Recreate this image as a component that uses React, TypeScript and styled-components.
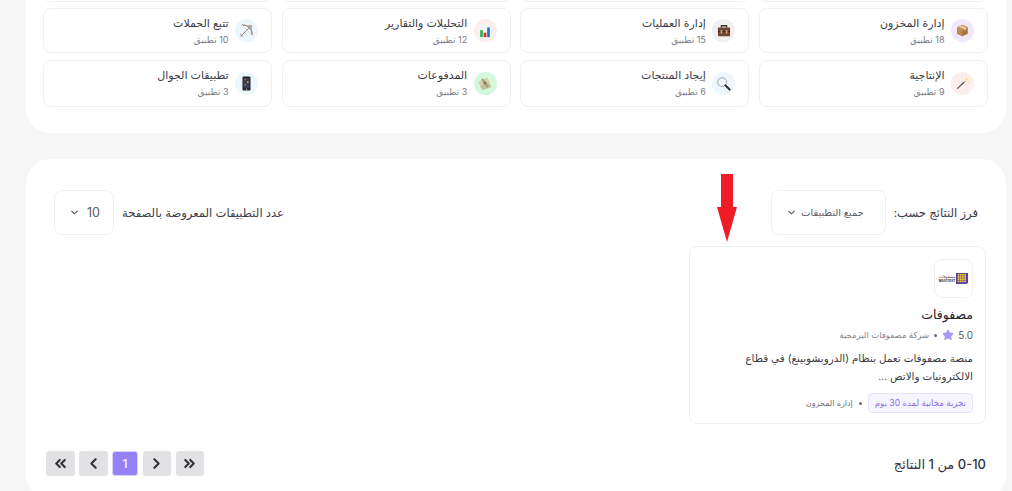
import styled, { createGlobalStyle } from "styled-components";
import { ChevronDown, ChevronLeft, ChevronRight, ChevronsLeft, ChevronsRight, Star } from "lucide-react";
import type { ReactNode } from "react";

const GlobalStyle = createGlobalStyle`
  html, body {
    margin: 0;
    padding: 0;
    height: 491px;
    overflow: hidden;
    background: #f6f6f6;
  }
  * { box-sizing: border-box; }
`;

const Page = styled.div`
  width: 1012px;
  height: 491px;
  overflow: hidden;
  padding: 0 6px 0 26px;
  font-family: "Inter", "DejaVu Sans", sans-serif;
  color: #33333d;
`;

const CategoryPanel = styled.section`
  background: #fff;
  border-radius: 0 0 24px 24px;
  margin-top: -60px;
  height: 193px;
  padding: 15.5px 18px 0 17px;
`;

const CategoryGrid = styled.div`
  display: grid;
  grid-template-columns: repeat(4, 229px);
  grid-template-rows: 46px 45px 47px;
  column-gap: 9.67px;
  row-gap: 6.5px;
`;

const CategoryCard = styled.div`
  display: flex;
  align-items: center;
  gap: 6.5px;
  padding: 0 13px;
  border: 1px solid #f0f0f3;
  border-radius: 8px;
  background: #fff;
`;

const IconCircle = styled.div<{ $bg: string }>`
  width: 23px;
  height: 23px;
  flex: none;
  border-radius: 50%;
  background: ${(p) => p.$bg};
  display: flex;
  align-items: center;
  justify-content: center;
`;

const CategoryName = styled.div`
  font-size: 11px;
  line-height: 15px;
  color: #3b3b45;
`;

const CategoryCount = styled.div`
  font-size: 9px;
  line-height: 13px;
  margin-top: 2px;
  color: #7c7c87;
`;

const ResultsPanel = styled.section`
  position: relative;
  margin-top: 26px;
  height: 340px;
  background: #fff;
  border-radius: 24px;
  padding: 31px 20px 0;
`;

const FilterBar = styled.div`
  display: flex;
  justify-content: space-between;
  padding: 0 8px;
`;

const FilterGroup = styled.div`
  display: flex;
  align-items: center;
  gap: 8px;
`;

const FilterLabel = styled.span`
  font-size: 11.6px;
  color: #3b3b45;
`;

const SelectBox = styled.div<{ $width: number; $inset: number; $size: number }>`
  width: ${(p) => p.$width}px;
  height: 45px;
  display: flex;
  align-items: center;
  justify-content: space-between;
  padding: 0 ${(p) => p.$inset}px 0 14px;
  border: 1px solid #f0f0f3;
  border-radius: 8px;
  font-size: ${(p) => p.$size}px;
  color: #5b5b66;
`;

const AppGrid = styled.div`
  display: grid;
  grid-template-columns: repeat(3, 1fr);
  column-gap: 25px;
  margin-top: 11px;
`;

const AppCard = styled.article`
  height: 178px;
  padding: 12px;
  border: 1px solid #f0f0f3;
  border-radius: 8px;
  display: flex;
  flex-direction: column;
`;

const LogoBox = styled.div`
  width: 39px;
  height: 39px;
  flex: none;
  border: 1px solid #f0f0f3;
  border-radius: 8px;
  display: flex;
  align-items: center;
  justify-content: center;
  gap: 1px;
`;

const LogoWords = styled.div`
  display: flex;
  flex-direction: column;
  align-items: center;
  color: #33333d;
`;

const LogoArabic = styled.span`
  font-size: 4px;
  line-height: 5px;
`;

const LogoLatin = styled.span`
  font-size: 3px;
  line-height: 4px;
  font-weight: 700;
`;

const AppTitle = styled.h3`
  margin: 7px 0 0;
  font-size: 12.5px;
  line-height: 20px;
  font-weight: 400;
  color: #22222a;
`;

const MetaRow = styled.div`
  display: flex;
  align-items: center;
  gap: 5px;
  margin-top: 3px;
  font-size: 8.5px;
  line-height: 14px;
  color: #85858f;
`;

const Rating = styled.span`
  display: flex;
  align-items: center;
  gap: 4px;
  color: #5b5b66;
  font-size: 10px;
`;

const Dot = styled.span`
  width: 3px;
  height: 3px;
  border-radius: 50%;
  background: #6b6b75;
`;

const Description = styled.p`
  margin: 8px 0 0;
  font-size: 10.4px;
  line-height: 18px;
  color: #3b3b45;
`;

const TagRow = styled.div`
  display: flex;
  align-items: center;
  gap: 6px;
  margin-top: 7px;
  font-size: 8px;
  color: #6b6b75;
`;

const TrialTag = styled.span`
  height: 20px;
  padding: 0 6px;
  display: flex;
  align-items: center;
  border: 1px solid #e8e3fb;
  border-radius: 4px;
  background: #f6f4fe;
  font-size: 8.6px;
  color: #8a72e8;
`;

const Footer = styled.div`
  display: flex;
  align-items: center;
  justify-content: space-between;
  margin-top: 27px;
`;

const ResultCount = styled.span`
  font-size: 13px;
  font-weight: 500;
  color: #33333d;
`;

const Pagination = styled.div`
  display: flex;
  gap: 4.5px;
`;

const PageButton = styled.button<{ $active?: boolean }>`
  width: ${(p) => (p.$active ? 26 : 28.5)}px;
  height: 25px;
  padding: 0;
  display: flex;
  align-items: center;
  justify-content: center;
  border: ${(p) => (p.$active ? "1px solid #d9d2fb" : "none")};
  border-radius: 3px;
  background: ${(p) => (p.$active ? "#9680f5" : "#e2e2e4")};
  color: ${(p) => (p.$active ? "#fff" : "#33333d")};
  font-family: "Inter", sans-serif;
  font-size: 12px;
  font-weight: 500;
`;

const Arrow = styled.svg`
  position: absolute;
  left: 691px;
  top: 15px;
`;

const BoxIcon = () => (
  <svg width="13" height="13" viewBox="0 0 16 16">
    <path d="M8 1l6.5 3v8L8 15l-6.5-3V4z" fill="#a9743f" />
    <path d="M8 7.5V15l-6.5-3V4z" fill="#c08a50" />
    <path d="M1.5 4L8 1l6.5 3L8 7.5z" fill="#d3a36c" />
    <path d="M4 2.8l6.5 3.2v2.2l1.6-.8V5L5.600 2z" fill="#f0dcbc" />
  </svg>
);

const BriefcaseIcon = () => (
  <svg width="14" height="13" viewBox="0 0 16 15">
    <path d="M5 4V2h6v2" fill="none" stroke="#3f2a20" strokeWidth="1.5" />
    <rect x="1" y="4" width="14" height="10" rx="1" fill="#6d4530" />
    <rect x="1" y="8" width="14" height="1.2" fill="#3f2a20" />
    <rect x="4" y="7" width="2" height="4" fill="#c9a27a" />
    <rect x="10" y="7" width="2" height="4" fill="#c9a27a" />
  </svg>
);

const ChartIcon = () => (
  <svg width="14" height="14" viewBox="0 0 16 16">
    <rect x="1" y="1" width="14" height="14" fill="#f3f5f8" />
    <rect x="2.500" y="7" width="3" height="8" fill="#2fb04f" />
    <rect x="6.500" y="10" width="3" height="5" fill="#d92b2b" />
    <rect x="10.500" y="4" width="3" height="11" fill="#2470c8" />
  </svg>
);

const BowIcon = () => (
  <svg width="15" height="15" viewBox="0 0 16 16" fill="none">
    <path d="M3 2c7 0 11 4 11 11" stroke="#a08a7c" strokeWidth="1.400" />
    <path d="M3 2l11 11" stroke="#d5ccc6" strokeWidth="0.800" />
    <path d="M2 14L13 3" stroke="#8a7568" strokeWidth="0.900" />
    <path d="M10 2.500h3.500V6" stroke="#b3a194" strokeWidth="1" />
    <path d="M2 11v3h3" stroke="#b3a194" strokeWidth="1" />
  </svg>
);

const WandIcon = () => (
  <svg width="14" height="14" viewBox="0 0 16 16" fill="none">
    <path d="M1.500 14.500L10.500 6" stroke="#4a4a52" strokeWidth="1.300" />
    <path d="M9 7.500L10.500 6" stroke="#c8c8c8" strokeWidth="1.300" />
    <path d="M12 1l.6 1.900 1.900.6-1.900.6L12 6l-.6-1.900-1.900-.6 1.900-.6z" fill="#f4dc6a" />
    <circle cx="14.500" cy="7" r="0.800" fill="#f4dc6a" />
  </svg>
);

const SearchIcon = () => (
  <svg width="15" height="15" viewBox="0 0 16 16" fill="none">
    <circle cx="6.500" cy="6.500" r="4.700" fill="#f4f8fc" stroke="#9aa0a6" strokeWidth="1" />
    <path d="M10 10l4.500 4.500" stroke="#2b2b33" strokeWidth="2.200" strokeLinecap="round" />
  </svg>
);

const MoneyIcon = () => (
  <svg width="16" height="15" viewBox="0 0 16 15">
    <path d="M1 6l9-4.500 3 5-9 4.500z" fill="#d6cfae" />
    <path d="M3 10l9-3 2.500 4-9 3z" fill="#c2bd96" />
    <path d="M5 3l6 8" stroke="#a39c72" strokeWidth="2" />
    <circle cx="8" cy="7" r="1.600" fill="#7d7a50" />
  </svg>
);

const PhoneIcon = () => (
  <svg width="9" height="15" viewBox="0 0 9 15">
    <rect x="0.500" y="0.500" width="8" height="14" rx="1" fill="#23252b" />
    <rect x="1.500" y="2" width="6" height="10" fill="#3a3f4a" />
    <rect x="2.500" y="3" width="1.500" height="1.500" fill="#d14a3a" />
    <rect x="5" y="5.500" width="1.500" height="1.500" fill="#e0b84a" />
    <rect x="2.500" y="8" width="1.500" height="1.500" fill="#4a8fd1" />
    <circle cx="4.500" cy="13.300" r="0.700" fill="#c8c8c8" />
  </svg>
);

const LogoMark = () => (
  <svg width="12" height="11" viewBox="0 0 12 11">
    <path d="M0 0h12v9.500L10.500 11H0z" fill="#5a3f9e" />
    <g fill="#f2cf3a">
      {[2.5, 4.7, 6.9, 9.1].map((x) =>
        [1.7, 3.9, 6.1, 8.3].map((y) => <rect key={`${x}-${y}`} x={x - 0.8} y={y - 0.8} width="1.700" height="1.700" />)
      )}
    </g>
  </svg>
);

type Category = { name: string; count: string; bg: string; icon: ReactNode };

const categories: Category[] = [
  { name: "إدارة المخزون", count: "18 تطبيق", bg: "#f1e9fb", icon: <BoxIcon /> },
  { name: "إدارة العمليات", count: "15 تطبيق", bg: "#f0f0f1", icon: <BriefcaseIcon /> },
  { name: "التحليلات والتقارير", count: "12 تطبيق", bg: "#fdeeee", icon: <ChartIcon /> },
  { name: "تتبع الحملات", count: "10 تطبيق", bg: "#edf5fd", icon: <BowIcon /> },
  { name: "الإنتاجية", count: "9 تطبيق", bg: "#fdeeee", icon: <WandIcon /> },
  { name: "إيجاد المنتجات", count: "6 تطبيق", bg: "#edf5fd", icon: <SearchIcon /> },
  { name: "المدفوعات", count: "3 تطبيق", bg: "#d3f8dc", icon: <MoneyIcon /> },
  { name: "تطبيقات الجوال", count: "3 تطبيق", bg: "#edf5fd", icon: <PhoneIcon /> },
];

const App = () => {
  return (
    <Page dir="rtl">
      <GlobalStyle />
      <CategoryPanel>
        <CategoryGrid>
          {[0, 1, 2, 3].map((i) => (
            <CategoryCard key={i} />
          ))}
          {categories.map((c) => (
            <CategoryCard key={c.name}>
              <IconCircle $bg={c.bg}>{c.icon}</IconCircle>
              <div>
                <CategoryName>{c.name}</CategoryName>
                <CategoryCount>{c.count}</CategoryCount>
              </div>
            </CategoryCard>
          ))}
        </CategoryGrid>
      </CategoryPanel>

      <ResultsPanel>
        <Arrow width="20" height="68" viewBox="0 0 20 68">
          <path d="M4 0h12v33h4L10 68 0 33h4z" fill="#ee1c25" />
        </Arrow>
        <FilterBar>
          <FilterGroup>
            <FilterLabel>فرز النتائج حسب:</FilterLabel>
            <SelectBox $width={115} $inset={21} $size={9.8}>
              <span>جميع التطبيقات</span>
              <ChevronDown size={11} strokeWidth={2.5} />
            </SelectBox>
          </FilterGroup>
          <FilterGroup>
            <FilterLabel>عدد التطبيقات المعروضة بالصفحة</FilterLabel>
            <SelectBox $width={60} $inset={13} $size={12.5}>
              <span>10</span>
              <ChevronDown size={11} strokeWidth={2.5} />
            </SelectBox>
          </FilterGroup>
        </FilterBar>

        <AppGrid>
          <AppCard>
            <LogoBox>
              <LogoMark />
              <LogoWords>
                <LogoArabic>مصفوفات</LogoArabic>
                <LogoLatin>MASFOFAT</LogoLatin>
              </LogoWords>
            </LogoBox>
            <AppTitle>مصفوفات</AppTitle>
            <MetaRow>
              <Rating>
                5.0
                <Star size={12} fill="#a796f5" stroke="#a796f5" />
              </Rating>
              <Dot />
              <span>شركة مصفوفات البرمجية</span>
            </MetaRow>
            <Description>منصة مصفوفات تعمل بنظام (الدروبشوبينغ) في قطاع الالكترونيات والاتص ...</Description>
            <TagRow>
              <TrialTag>تجربة مجانية لمدة 30 يوم</TrialTag>
              <Dot />
              <span>إدارة المخزون</span>
            </TagRow>
          </AppCard>
        </AppGrid>

        <Footer>
          <ResultCount>0-10 من 1 النتائج</ResultCount>
          <Pagination>
            <PageButton aria-label="الأخيرة">
              <ChevronsRight size={17} strokeWidth={3} />
            </PageButton>
            <PageButton aria-label="التالية">
              <ChevronRight size={17} strokeWidth={3} />
            </PageButton>
            <PageButton $active>1</PageButton>
            <PageButton aria-label="السابقة">
              <ChevronLeft size={17} strokeWidth={3} />
            </PageButton>
            <PageButton aria-label="الأولى">
              <ChevronsLeft size={17} strokeWidth={3} />
            </PageButton>
          </Pagination>
        </Footer>
      </ResultsPanel>
    </Page>
  );
};

export default App;
